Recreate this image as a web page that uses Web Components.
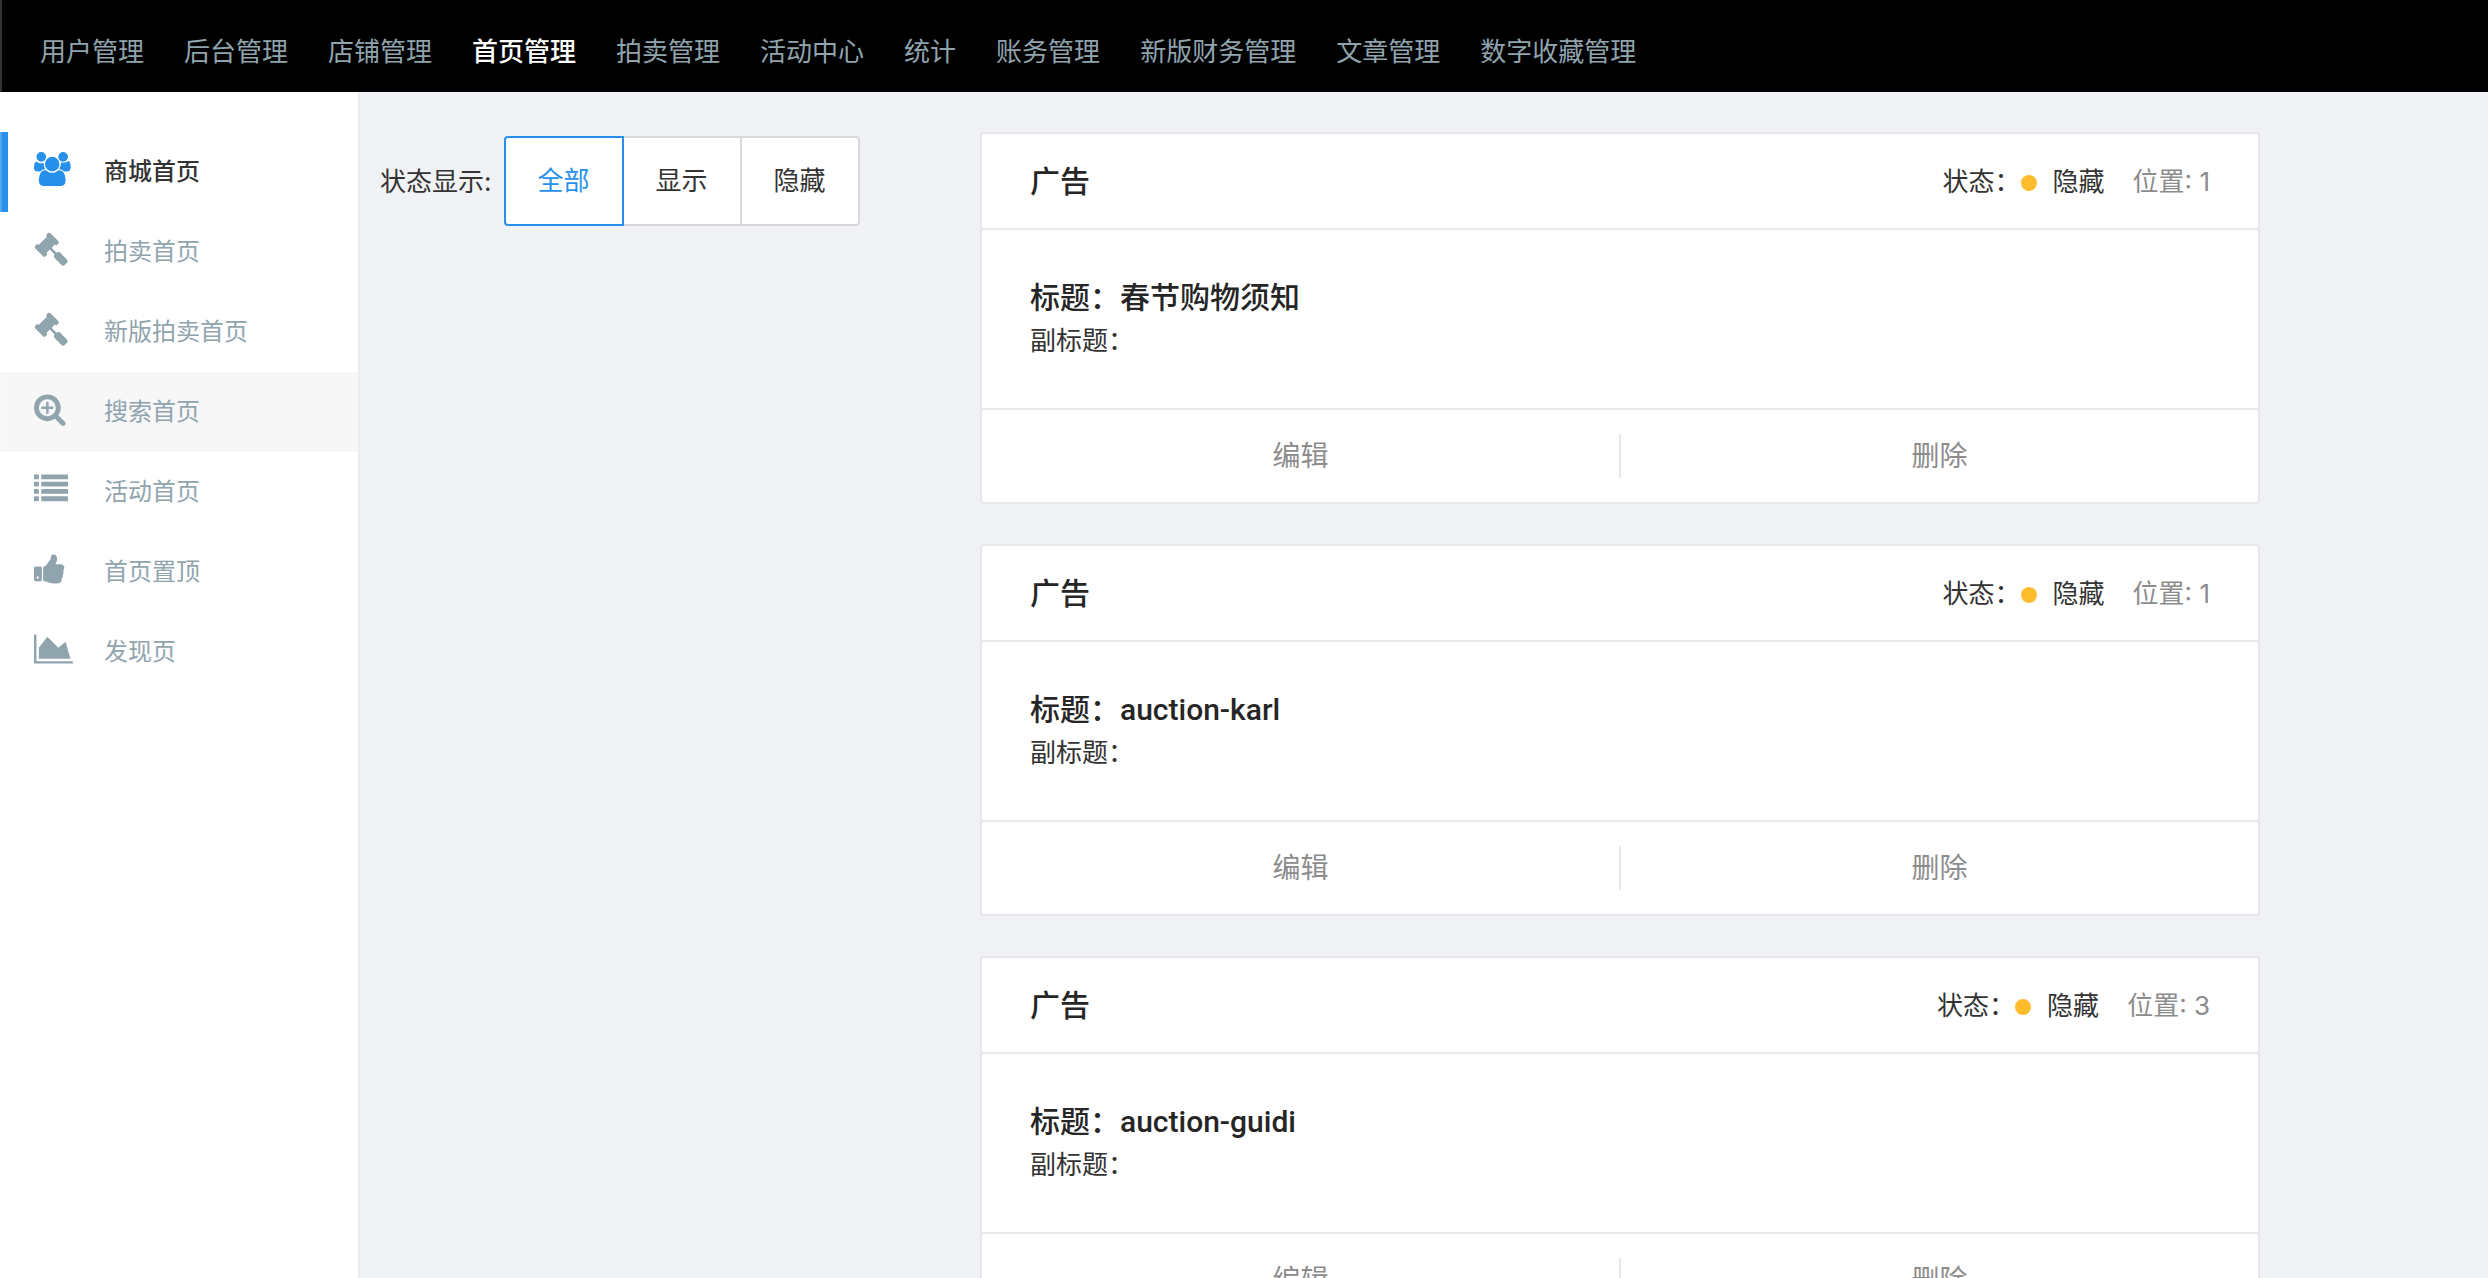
<!DOCTYPE html>
<html lang="zh-CN">
<head>
<meta charset="utf-8">
<title>首页管理</title>
<style>
  html, body { margin: 0; height: 100%; }
  body {
    font-family: Inter, "Noto Sans CJK SC", sans-serif;
    font-size: 26px;
    color: #333;
    background: #f0f2f5;
    --blue: #2690ea;
    --slate: #90a4ae;
    --line: #e8e8e8;
    --ink: #262626;
    --muted: #8c8c8c;
  }
</style>
</head>
<body>
<admin-shell>
  <top-nav slot="top">
    <nav-link>用户管理</nav-link>
    <nav-link>后台管理</nav-link>
    <nav-link>店铺管理</nav-link>
    <nav-link active>首页管理</nav-link>
    <nav-link>拍卖管理</nav-link>
    <nav-link>活动中心</nav-link>
    <nav-link>统计</nav-link>
    <nav-link>账务管理</nav-link>
    <nav-link>新版财务管理</nav-link>
    <nav-link>文章管理</nav-link>
    <nav-link>数字收藏管理</nav-link>
  </top-nav>

  <side-menu slot="side">
    <side-item icon="users" active>商城首页</side-item>
    <side-item icon="gavel">拍卖首页</side-item>
    <side-item icon="gavel">新版拍卖首页</side-item>
    <side-item icon="search" hovered>搜索首页</side-item>
    <side-item icon="list">活动首页</side-item>
    <side-item icon="thumb">首页置顶</side-item>
    <side-item icon="chart">发现页</side-item>
  </side-menu>

  <status-filter slot="filter" label="状态显示:" options="全部,显示,隐藏"></status-filter>

  <ad-card position="1">春节购物须知</ad-card>
  <ad-card position="1">auction-karl</ad-card>
  <ad-card position="3">auction-guidi</ad-card>
</admin-shell>

<script>
const ICONS = {
  users: ['64 0 1984 1792', 'M657 896q-162 5-265 128h-134q-82 0-138-40.5t-56-118.5q0-353 124-353 6 0 43.5 21t97.5 42.5 119 21.5q67 0 133-23-5 37-5 66 0 159 93 290zm1071 637q0 120-73 189.5t-194 69.5h-874q-121 0-194-69.5t-73-189.5q0-53 3.5-103.5t14-109 26.5-108.5 43-97.5 62-81 85.5-53.5 111.5-20q10 0 43 21.5t73 48 107 48 135 21.5 135-21.5 107-48 73-48 43-21.5q61 0 111.5 20t85.5 53.5 62 81 43 97.5 26.5 108.5 14 109 3.5 103.5zm-1024-1277q0 106-75 181t-181 75-181-75-75-181 75-181 181-75 181 75 75 181zm704 384q0 159-112.5 271.5t-271.5 112.5-271.5-112.5-112.5-271.5 112.5-271.5 271.5-112.5 271.5 112.5 112.5 271.5zm576 225q0 78-56 118.5t-138 40.5h-134q-103-123-265-128 93-131 93-290 0-29-5-66 66 23 133 23 59 0 119-21.5t97.5-42.5 43.5-21q124 0 124 353zm-128-609q0 106-75 181t-181 75-181-75-75-181 75-181 181-75 181 75 75 181z'],
  gavel: ['0 0 1792 1792', 'M1771 1536q0 53-37 90l-107 108q-39 37-91 37-53 0-90-37l-363-364q-38-36-38-90 0-53 43-96l-256-256-126 126q-14 14-34 14t-34-14q2 2 12.5 12t12.5 13 10 11.5 10 13.5 6 13.5 5.5 16.5 1.5 18q0 38-28 68-3 3-16.5 18t-19 20.5-18.5 16.5-22 15.5-22 9-26 4.5q-40 0-68-28l-408-408q-28-28-28-68 0-13 4.5-26t9-22 15.5-22 16.5-18.5 20.5-19 18-16.5q30-28 68-28 10 0 18 1.5t16.5 5.5 13.5 6 13.5 10 11.5 10 13 12.5 12 12.5q-14-14-14-34t14-34l348-348q14-14 34-14t34 14q-2-2-12.5-12t-12.5-13-10-11.5-10-13.5-6-13.5-5.5-16.5-1.5-18q0-38 28-68 3-3 16.5-18t19-20.5 18.5-16.5 22-15.5 22-9 26-4.5q40 0 68 28l408 408q28 28 28 68 0 13-4.5 26t-9 22-15.5 22-16.5 18.5-20.5 19-18 16.5q-30 28-68 28-10 0-18-1.5t-16.5-5.5-13.5-6-13.5-10-11.5-10-13-12.5-12-12.5q14 14 14 34t-14 34l-126 126 256 256q43-43 96-43 52 0 91 37l363 363q37 39 37 91z'],
  search: ['64 0 1792 1792', 'M1088 800v64q0 13-9.5 22.5t-22.5 9.5h-224v224q0 13-9.5 22.5t-22.5 9.5h-64q-13 0-22.5-9.5t-9.5-22.5v-224h-224q-13 0-22.5-9.5t-9.5-22.5v-64q0-13 9.5-22.5t22.5-9.5h224v-224q0-13 9.5-22.5t22.5-9.5h64q13 0 22.5 9.5t9.5 22.5v224h224q13 0 22.5 9.5t9.5 22.5zm128 32q0-185-131.5-316.5t-316.5-131.5-316.5 131.5-131.5 316.5 131.5 316.5 316.5 131.5 316.5-131.5 131.5-316.5zm512 832q0 53-37.5 90.5t-90.5 37.5q-54 0-90-38l-343-342q-179 124-399 124-143 0-273.5-55.5t-225-150-150-225-55.5-273.5 55.5-273.5 150-225 225-150 273.5-55.5 273.5 55.5 225 150 150 225 55.5 273.5q0 220-124 399l343 343q37 37 37 90z'],
  list: ['0 0 1792 1792', [128, 512, 896, 1280].map(y =>
    `M32 ${y}h192q32 0 32 32v192q0 32-32 32h-192q-32 0-32-32v-192q0-32 32-32zM416 ${y}h1344q32 0 32 32v192q0 32-32 32h-1344q-32 0-32-32v-192q0-32 32-32z`).join('')],
  thumb: ['64 0 1792 1792', 'M320 1344q0-26-19-45t-45-19q-27 0-45.5 19t-18.5 45q0 27 18.5 45.5t45.5 18.5q26 0 45-18.5t19-45.5zm160-512v640q0 26-19 45t-45 19h-288q-26 0-45-19t-19-45v-640q0-26 19-45t45-19h288q26 0 45 19t19 45zm1184 0q0 86-55 149 15 44 15 76 3 76-43 137 17 56 0 117-15 57-54 94 9 112-49 181-64 76-197 78h-129q-66 0-144-15.5t-121.5-29-120.5-39.5q-123-43-158-44-26-1-45-19.5t-19-44.5v-641q0-25 18-43.5t43-20.5q24-2 76-59t101-121q68-87 101-120 18-18 31-48t17.5-48.5 13.5-60.5q7-39 12.5-61t19.5-52 34-50q19-19 45-19 46 0 82.5 10.5t60 26 40 40.5 24 45 12 50 5 45 .5 39q0 38-9.5 76t-19 60-27.5 56q-3 6-10 18t-11 22-8 24h277q78 0 135 57t57 135z'],
  chart: ['0 0 2048 1792', 'M2048 1536v128h-2048v-1536h128v1408h1920zm-384-1024l256 896h-1664v-576l448-576 576 576z']
};

class Base extends HTMLElement {
  connectedCallback() {
    if (!this.shadowRoot) this.attachShadow({ mode: 'open' }).innerHTML = this.view();
  }
}

customElements.define('admin-shell', class extends Base {
  view() { return `
    <style>
      :host { display: flex; flex-direction: column; height: 100vh; overflow: hidden; }
      .edge { position: fixed; inset: 0 auto 0 0; width: 2px; background: rgba(255,255,255,.2); pointer-events: none; z-index: 2; }
      .row { flex: 1; min-height: 0; display: flex; }
      main {
        flex: 1; min-width: 0; overflow-y: auto; scrollbar-width: none;
        display: grid; grid-template-columns: 600fr 1280fr 208fr; align-items: start;
        box-sizing: border-box; padding: 40px 20px;
      }
      .cards { display: flex; flex-direction: column; gap: 40px; }
    </style>
    <slot name="top"></slot>
    <div class="row">
      <slot name="side"></slot>
      <main><slot name="filter"></slot><div class="cards"><slot></slot></div></main>
    </div>
    <div class="edge"></div>`; }
});

customElements.define('top-nav', class extends Base {
  view() { return `
    <style>
      :host { display: block; flex: none; background: #000; }
      nav { display: flex; gap: 40px; height: 92px; padding: 12px 40px 0; box-sizing: border-box; align-items: center; }
    </style>
    <nav><slot></slot></nav>`; }
});

customElements.define('nav-link', class extends Base {
  view() { return `
    <style>
      :host { display: block; }
      a { display: block; line-height: 40px; color: var(--slate); text-decoration: none; white-space: nowrap; }
      :host([active]) a { color: #fff; font-weight: 500; }
    </style>
    <a href="#"><slot></slot></a>`; }
});

customElements.define('side-menu', class extends Base {
  view() { return `
    <style>
      :host { display: block; flex: none; width: 358px; background: #fff; border-right: 2px solid #ebecef; }
      nav { padding-top: 40px; }
    </style>
    <nav><slot></slot></nav>`; }
});

customElements.define('side-item', class extends Base {
  view() {
    const [box, d] = ICONS[this.getAttribute('icon')];
    const [x, y, right, h] = box.split(' ').map(Number);
    const w = right - x;
    return `
    <style>
      :host { display: block; }
      a {
        display: flex; align-items: flex-start; gap: 20px; padding: 20px 0 20px 26px;
        border-left: 8px solid transparent; color: var(--slate);
        font-size: 24px; line-height: 40px; text-decoration: none;
      }
      .icon { width: 50px; }
      svg { display: block; height: 34px; fill: currentColor; overflow: visible; }
      :host([hovered]) a { background: #f7f7f7; }
      :host([active]) a { border-color: var(--blue); color: #333; font-weight: 500; }
      :host([active]) .icon { color: var(--blue); }
    </style>
    <a href="#">
      <span class="icon"><svg viewBox="${x} ${y} ${w} ${h}" aria-hidden="true"><path d="${d}"/></svg></span>
      <span><slot></slot></span>
    </a>`; }
});

customElements.define('status-filter', class extends Base {
  view() {
    const options = this.getAttribute('options').split(',');
    return `
    <style>
      :host { display: block; }
      fieldset { display: flex; align-items: center; gap: 12px; margin: 0; padding: 4px 0; border: 0; min-width: 0; }
      #t { padding-bottom: 4px; }
      .group { display: flex; }
      label {
        position: relative; box-sizing: border-box; height: 90px; padding: 0 32px; line-height: 86px;
        background: #fff; border: 2px solid #d9d9d9; white-space: nowrap; cursor: pointer;
      }
      label + label { margin-left: -2px; }
      label:first-child { border-radius: 4px 0 0 4px; }
      label:last-child { border-radius: 0 4px 4px 0; }
      label:has(:checked) { color: var(--blue); border-color: var(--blue); z-index: 1; }
      input { position: absolute; inset: 0; margin: 0; opacity: 0; }
    </style>
    <fieldset role="radiogroup" aria-labelledby="t">
      <span id="t">${this.getAttribute('label')}</span>
      <div class="group">${options.map((o, i) =>
        `<label><input type="radio" name="status" ${i ? '' : 'checked'}>${o}</label>`).join('')}</div>
    </fieldset>`; }
});

customElements.define('ad-card', class extends Base {
  view() { return `
    <style>
      :host { display: block; background: #fff; border: 2px solid var(--line); border-radius: 4px; }
      header { display: flex; align-items: center; height: 94px; padding: 0 48px; border-bottom: 2px solid var(--line); }
      h2, h3 { margin: 0; font-size: 30px; line-height: 40px; font-weight: 500; color: var(--ink); }
      h2 { flex: 1; }
      h3 { font-family: Roboto, "Noto Sans CJK SC", sans-serif; }
      .status, .place { display: flex; align-items: center; padding-bottom: 4px; }
      .dot { width: 16px; height: 16px; margin: 8px 16px 0 0; border-radius: 50%; background: #ffbd2e; }
      .place { margin-left: 28px; color: var(--muted); }
      .body { padding: 48px; }
      p { margin: 4px 0 0; line-height: 38px; }
      footer { display: flex; border-top: 2px solid var(--line); padding: 24px 0; }
      button {
        flex: 1; height: 44px; padding: 0; border: 0; background: none; cursor: pointer;
        font: inherit; font-size: 28px; line-height: 44px; color: var(--muted);
      }
      button:first-child { border-right: 2px solid var(--line); box-sizing: border-box; }
    </style>
    <header>
      <h2>广告</h2>
      <span class="status">状态：<i class="dot"></i>隐藏</span>
      <span class="place">位置: ${this.getAttribute('position')}</span>
    </header>
    <div class="body">
      <h3>标题：<slot></slot></h3>
      <p>副标题：</p>
    </div>
    <footer><button type="button">编辑</button><button type="button">删除</button></footer>`; }
});
</script>
</body>
</html>
